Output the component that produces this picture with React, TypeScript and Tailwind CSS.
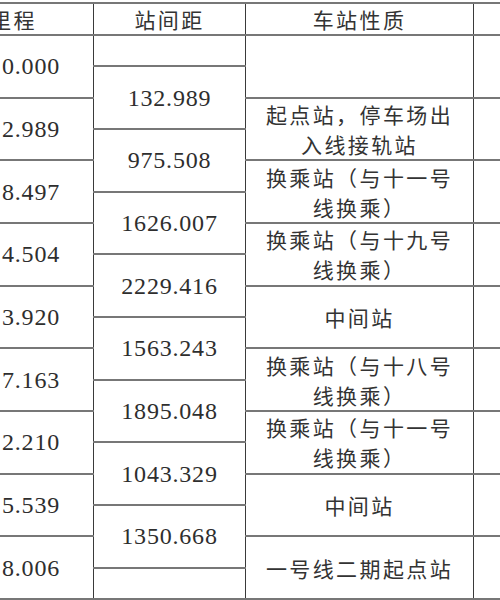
const MILEAGE = ["0.000", "2.989", "8.497", "4.504", "3.920", "7.163", "2.210", "5.539", "8.006"];
const SPANS = ["132.989", "975.508", "1626.007", "2229.416", "1563.243", "1895.048", "1043.329", "1350.668"];
const KINDS: string[][] = [
  [],
  ["起点站，停车场出", "入线接轨站"],
  ["换乘站（与十一号", "线换乘）"],
  ["换乘站（与十九号", "线换乘）"],
  ["中间站"],
  ["换乘站（与十八号", "线换乘）"],
  ["换乘站（与十一号", "线换乘）"],
  ["中间站"],
  ["一号线二期起点站"],
];

const cell = "border-x border-x-[#3a3a3a] border-y-2 border-y-[#777] p-0 align-middle";
const num = "font-['Liberation_Serif',serif] text-[24px] leading-[26px] tracking-[0.8px] text-[#2e2e2e]";
const cjk = "font-['Noto_Sans_CJK_SC',sans-serif] text-[21px] tracking-[2.4px] leading-[30px] text-[#333]";

export default function App() {
  // 18 half rows; mileage + kind cells span 2, station spacing cells are offset by one
  const rows = [];
  for (let i = 0; i < 18; i++) {
    const main = i % 2 === 0 ? i / 2 : -1;
    const spanIdx = i % 2 === 1 ? (i - 1) / 2 : -1;
    rows.push(
      <tr key={i} className="h-[31.33px]">
        {main >= 0 && (
          <td rowSpan={2} className={`${cell} ${num} text-right pr-[33px]`}>
            {MILEAGE[main]}
          </td>
        )}
        {i === 0 && <td className={cell}></td>}
        {spanIdx >= 0 && spanIdx < SPANS.length && (
          <td rowSpan={2} className={`${cell} ${num} text-center`}>
            {SPANS[spanIdx]}
          </td>
        )}
        {i === 17 && <td className={cell}></td>}
        {main >= 0 && (
          <td rowSpan={2} className={`${cell} ${cjk} text-center`}>
            {KINDS[main].map((l, k) => (
              <div key={k}>{l}</div>
            ))}
          </td>
        )}
        {main >= 0 && <td rowSpan={2} className={cell}></td>}
      </tr>
    );
  }

  return (
    <div className="w-[500px] h-[600px] overflow-hidden bg-white">
      <table className="table-fixed border-collapse ml-[-20px] mt-[2px] w-[593px]">
        <colgroup>
          <col className="w-[113px]" />
          <col className="w-[152px]" />
          <col className="w-[228px]" />
          <col className="w-[100px]" />
        </colgroup>
        <thead>
          <tr className="h-[31px]">
            <th className={`${cell} ${cjk} font-normal text-right pr-[56px]`}>里程</th>
            <th className={`${cell} ${cjk} font-normal text-center`}>站间距</th>
            <th className={`${cell} ${cjk} font-normal text-center`}>车站性质</th>
            <th className={cell}></th>
          </tr>
        </thead>
        <tbody>{rows}</tbody>
      </table>
    </div>
  );
}
